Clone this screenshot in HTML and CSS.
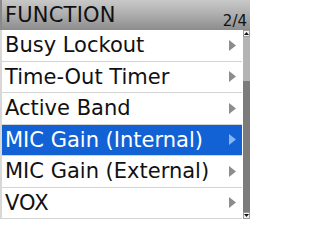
FILE: index.html
```html
<!DOCTYPE html>
<html>
<head>
<meta charset="utf-8">
<link rel="stylesheet" href="styles.css">
</head>
<body>
<div class="screen">
  <div class="header">
    <span class="title">FUNCTION</span>
    <span class="page">2/4</span>
  </div>
  <div class="body">
    <ul class="list">
      <li class="row"><span>Busy Lockout</span><svg class="arrow" viewBox="0 0 7 11"><polygon points="0,0 7,5.5 0,11"/></svg></li>
      <li class="row"><span>Time-Out Timer</span><svg class="arrow" viewBox="0 0 7 11"><polygon points="0,0 7,5.5 0,11"/></svg></li>
      <li class="row"><span>Active Band</span><svg class="arrow" viewBox="0 0 7 11"><polygon points="0,0 7,5.5 0,11"/></svg></li>
      <li class="row selected"><span>MIC Gain (Internal)</span><svg class="arrow" viewBox="0 0 7 11"><polygon points="0,0 7,5.5 0,11"/></svg></li>
      <li class="row"><span>MIC Gain (External)</span><svg class="arrow" viewBox="0 0 7 11"><polygon points="0,0 7,5.5 0,11"/></svg></li>
      <li class="row"><span>VOX</span><svg class="arrow" viewBox="0 0 7 11"><polygon points="0,0 7,5.5 0,11"/></svg></li>
    </ul>
    <div class="scrollbar">
      <div class="sb-btn"><svg viewBox="0 0 5 3"><polygon points="0,3 2.5,0 5,3"/></svg></div>
      <div class="sb-thumb"></div>
      <div class="sb-track"></div>
      <div class="sb-btn"><svg viewBox="0 0 5 3"><polygon points="0,0 5,0 2.5,3"/></svg></div>
    </div>
  </div>
</div>
</body>
</html>
```
FILE: styles.css
```css
html, body {
  margin: 0;
  padding: 0;
  background: #ffffff;
}
.screen {
  width: 250px;
  height: 219px;
  overflow: hidden;
  display: flex;
  flex-direction: column;
  font-family: "DejaVu Sans", "Noto Sans", sans-serif;
  color: #111;
}
.header {
  height: 30px;
  flex: none;
  display: flex;
  justify-content: space-between;
  align-items: flex-start;
  background: linear-gradient(#c8c8c8, #b0b0b0 45%, #8c8c8c);
  border-left: 2px solid #8a8a8a;
  box-sizing: border-box;
  padding: 1px 3px 0 3px;
}
.title {
  font-size: 21px;
  line-height: 28px;
  letter-spacing: 0.2px;
}
.page {
  align-self: flex-end;
  font-size: 15px;
  line-height: 15px;
  margin-bottom: 1px;
}
.body {
  flex: 1;
  display: flex;
  min-height: 0;
}
.list {
  list-style: none;
  margin: 0;
  padding: 0;
  flex: 1;
  border-left: 2px solid #d8d8d8;
}
.row {
  height: 30.5px;
  border-bottom: 1px solid #d4d4d4;
  display: flex;
  align-items: center;
  justify-content: space-between;
  padding: 0 6px 0 3px;
  font-size: 21px;
  line-height: 30px;
}
.row span {
  white-space: nowrap;
}
.arrow {
  width: 7px;
  height: 11px;
  fill: #8c8c8c;
  flex: none;
}
.selected {
  background: #1262d6;
  color: #ffffff;
}
.selected .arrow {
  fill: #86b6f2;
}
.scrollbar {
  width: 7px;
  flex: none;
  display: flex;
  flex-direction: column;
  background: #7c7c7c;
  margin-left: 1px;
}
.sb-btn {
  height: 7px;
  flex: none;
  background: #f4f4f4;
  border: 1px solid #9a9a9a;
  box-sizing: border-box;
  display: flex;
  align-items: center;
  justify-content: center;
}
.sb-btn svg {
  width: 5px;
  height: 3px;
  fill: #111;
}
.sb-thumb {
  height: 44px;
  flex: none;
  background: #b4b4b4;
}
.sb-track {
  flex: 1;
  background: #7c7c7c;
}
```
